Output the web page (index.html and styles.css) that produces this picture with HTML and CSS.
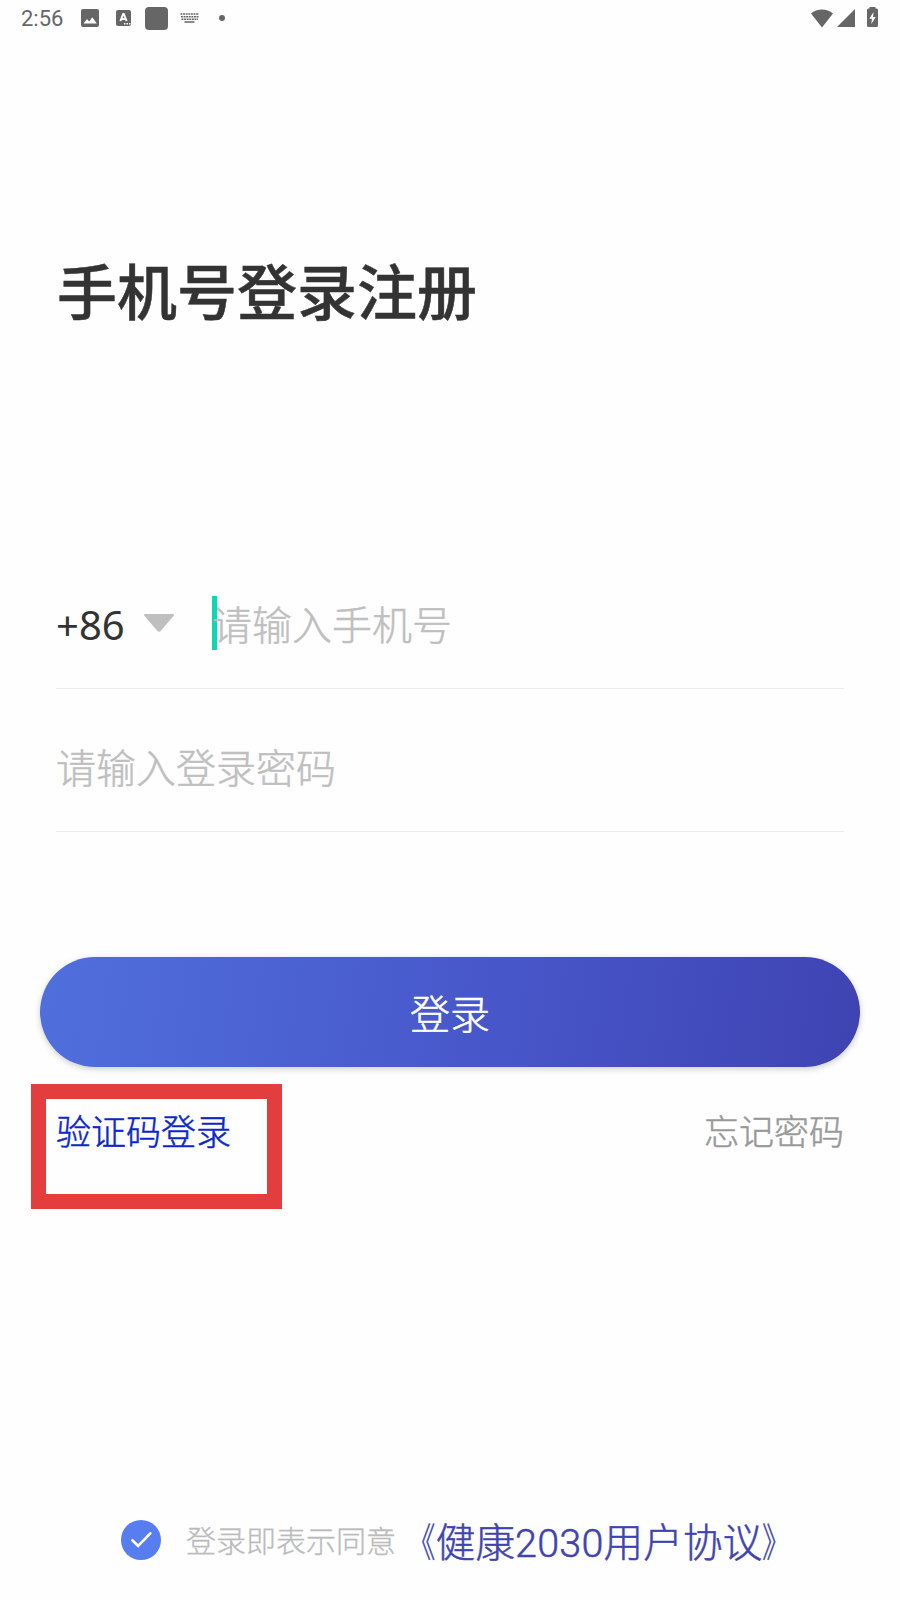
FILE: index.html
```html
<!DOCTYPE html>
<html lang="zh-CN">

<head>
    <meta charset="UTF-8">
    <meta name="viewport" content="width=device-width, initial-scale=1.0">
    <title>手机号登录注册</title>
    <link rel="stylesheet" href="styles.css">
</head>

<body>
<header class="status-bar">
    <span class="time">2:56</span>
    <svg class="icon-picture" width="18" height="18" viewBox="0 0 18 18">
        <rect width="18" height="18" rx="2" fill="#666"/>
        <path d="M2.5 14.5 L6 10 L8.2 12.5 L11.3 8.3 L15.8 14.5 Z" fill="#fff"/>
    </svg>
    <svg class="icon-letter" width="15" height="16" viewBox="0 0 15 16">
        <rect width="15" height="16" rx="2" fill="#666"/>
        <path d="M4.4 11 L7.2 4 H7.8 L10.6 11 M5.4 9 H9.6" fill="none" stroke="#fff" stroke-width="2"/>
        <path d="M8 13.7 h1.5 m1 0 h1.5 m1 0 h1.5" stroke="#fff" stroke-width="1.4"/>
    </svg>
    <span class="icon-square"></span>
    <svg class="icon-keyboard" width="19" height="10" viewBox="0 0 19 10">
        <path d="M0.5 1 H19 M1 3.7 H18.5 M1.5 6.3 H18" fill="none" stroke="#666" stroke-width="1.5" stroke-dasharray="1.9 0.7"/>
        <path d="M4.5 9 H14.5" stroke="#666" stroke-width="1.5"/>
    </svg>
    <span class="dot"></span>
    <svg class="icon-wifi" width="24" height="19" viewBox="0 0 24 19">
        <path d="M1 4.6 C7 -0.8 17 -0.8 23 4.6 L12 18.5 Z" fill="#666"/>
    </svg>
    <svg class="icon-signal" width="18" height="18" viewBox="0 0 18 18">
        <path d="M18 0 V18 H0 Z" fill="#666"/>
    </svg>
    <svg class="icon-battery" width="11" height="20" viewBox="0 0 11 20">
        <path d="M2.5 0 H8.5 V1.5 H9.5 Q11 1.5 11 3 V18.5 Q11 20 9.5 20 H1.5 Q0 20 0 18.5 V3 Q0 1.5 1.5 1.5 H2.5 Z" fill="#666"/>
        <path d="M6.5 5 L2.3 11.8 H5 L4.3 17 L8.8 10 H6 Z" fill="#fff"/>
    </svg>
</header>

<main class="login">
    <h1>手机号登录注册</h1>

    <div class="field phone">
        <span class="code">+86</span>
        <svg class="arrow" width="30" height="18" viewBox="0 0 30 18">
            <path d="M1 0 H29 Q31 0.5 29 2.5 L17 16.5 Q15 19 13 16.5 L1 2.5 Q-1 0.5 1 0 Z" fill="#bfbfbf"/>
        </svg>
        <span class="cursor"></span>
        <span class="placeholder">请输入手机号</span>
    </div>
    <div class="field password">
        <span class="placeholder">请输入登录密码</span>
    </div>

    <button class="login-btn" type="button">登录</button>

    <div class="links">
        <a class="code-login">验证码登录</a>
        <a class="forgot">忘记密码</a>
    </div>
</main>

<footer class="agreement">
    <svg class="check" width="40" height="40" viewBox="0 0 40 40">
        <circle cx="20" cy="20" r="20" fill="#587df0"/>
        <path d="M11.3 20.3 L17.2 26 L29.3 13.3" fill="none" stroke="#fff" stroke-width="2.6" stroke-linecap="round"/>
    </svg>
    <span class="agree-text">登录即表示同意</span>
    <a class="agree-link"><span class="open">《</span>健康2030用户协议<span class="close">》</span></a>
</footer>
</body>
</html>
```
FILE: styles.css
```css
* {
    box-sizing: border-box;
}

body {
    margin: 0;
    height: 1600px;
    display: flex;
    flex-direction: column;
    background-color: #fefefe;
    font-family: Roboto, "Noto Sans CJK SC", sans-serif;
    font-weight: 300;
    color: #333;
    -webkit-text-stroke: 0.5px currentColor;
}

/* status bar */
.status-bar {
    display: flex;
    align-items: center;
    height: 36px;
    padding: 0 22px 0 21px;
    color: #666;
}

.time {
    width: 60px;
    font-size: 22px;
    font-weight: 400;
    line-height: 36px;
    padding-top: 2px;
    -webkit-text-stroke: 0;
}

.icon-letter {
    margin-left: 17px;
}

.icon-square {
    width: 23px;
    height: 23px;
    margin-left: 14px;
    border-radius: 4px;
    background-color: #666;
}

.icon-keyboard {
    margin-left: 12px;
}

.dot {
    width: 6px;
    height: 6px;
    margin-left: 20px;
    border-radius: 50%;
    background-color: #666;
}

.icon-wifi {
    margin-left: auto;
}

.icon-signal {
    margin-left: 3px;
}

.icon-battery {
    margin-left: 12px;
    margin-bottom: 2px;
}

/* login form */
.login {
    flex: 1;
    padding: 0 40px;
}

h1 {
    margin: 215px 0 0 17px;
    height: 88px;
    line-height: 88px;
    font-size: 60px;
    font-weight: 500;
}

.field {
    display: flex;
    align-items: center;
    margin: 0 16px;
    border-bottom: 1px solid #ebebeb;
    font-size: 40px;
    line-height: 60px;
}

.phone {
    height: 129px;
    margin-top: 221px;
    padding-bottom: 2px;
}

.code {
    width: 88px;
    padding-top: 4px;
    font-family: "Noto Sans", sans-serif;
    font-weight: 400;
    -webkit-text-stroke: 0;
}

.cursor {
    width: 5px;
    height: 54px;
    margin-left: 38px;
    background-color: #0bd8b6;
}

.placeholder {
    color: #bfbfbf;
}

.phone .placeholder {
    margin-left: -5px;
    padding-top: 7px;
}

.password {
    height: 143px;
    padding-top: 20px;
}

.login-btn {
    display: block;
    width: 820px;
    height: 110px;
    margin-top: 125px;
    padding: 0;
    border: none;
    border-radius: 55px;
    background: linear-gradient(98deg, #506fdc, #4859cc 50%, #3f43b2);
    box-shadow: 0 2px 6px rgba(0, 0, 0, 0.2);
    color: #fff;
    font-family: inherit;
    font-size: 40px;
    font-weight: inherit;
}

.links {
    display: flex;
    justify-content: space-between;
    align-items: flex-start;
    margin: 17px 16px 0 -9px;
    font-size: 35px;
    line-height: 52px;
}

.code-login {
    width: 251px;
    height: 125px;
    padding: 9px 0 0 10px;
    border: 15px solid #e33d3d;
    color: #0a26cc;
}

.forgot {
    margin-top: 24px;
    color: #999;
}

/* agreement */
.agreement {
    display: flex;
    align-items: center;
    height: 120px;
    padding-left: 121px;
}

.agree-text {
    margin-left: 25px;
    padding-bottom: 2px;
    color: #bbb;
    font-size: 30px;
    -webkit-text-stroke-width: 0.3px;
}

.agree-link {
    padding-bottom: 2px;
    color: #3f43b2;
    font-size: 39.5px;
    letter-spacing: 0.2px;
}

/* narrow brackets */
.open,
.close {
    display: inline-block;
    transform: scaleX(0.72);
}

.open {
    transform-origin: right;
}

.close {
    transform-origin: left;
}
```
